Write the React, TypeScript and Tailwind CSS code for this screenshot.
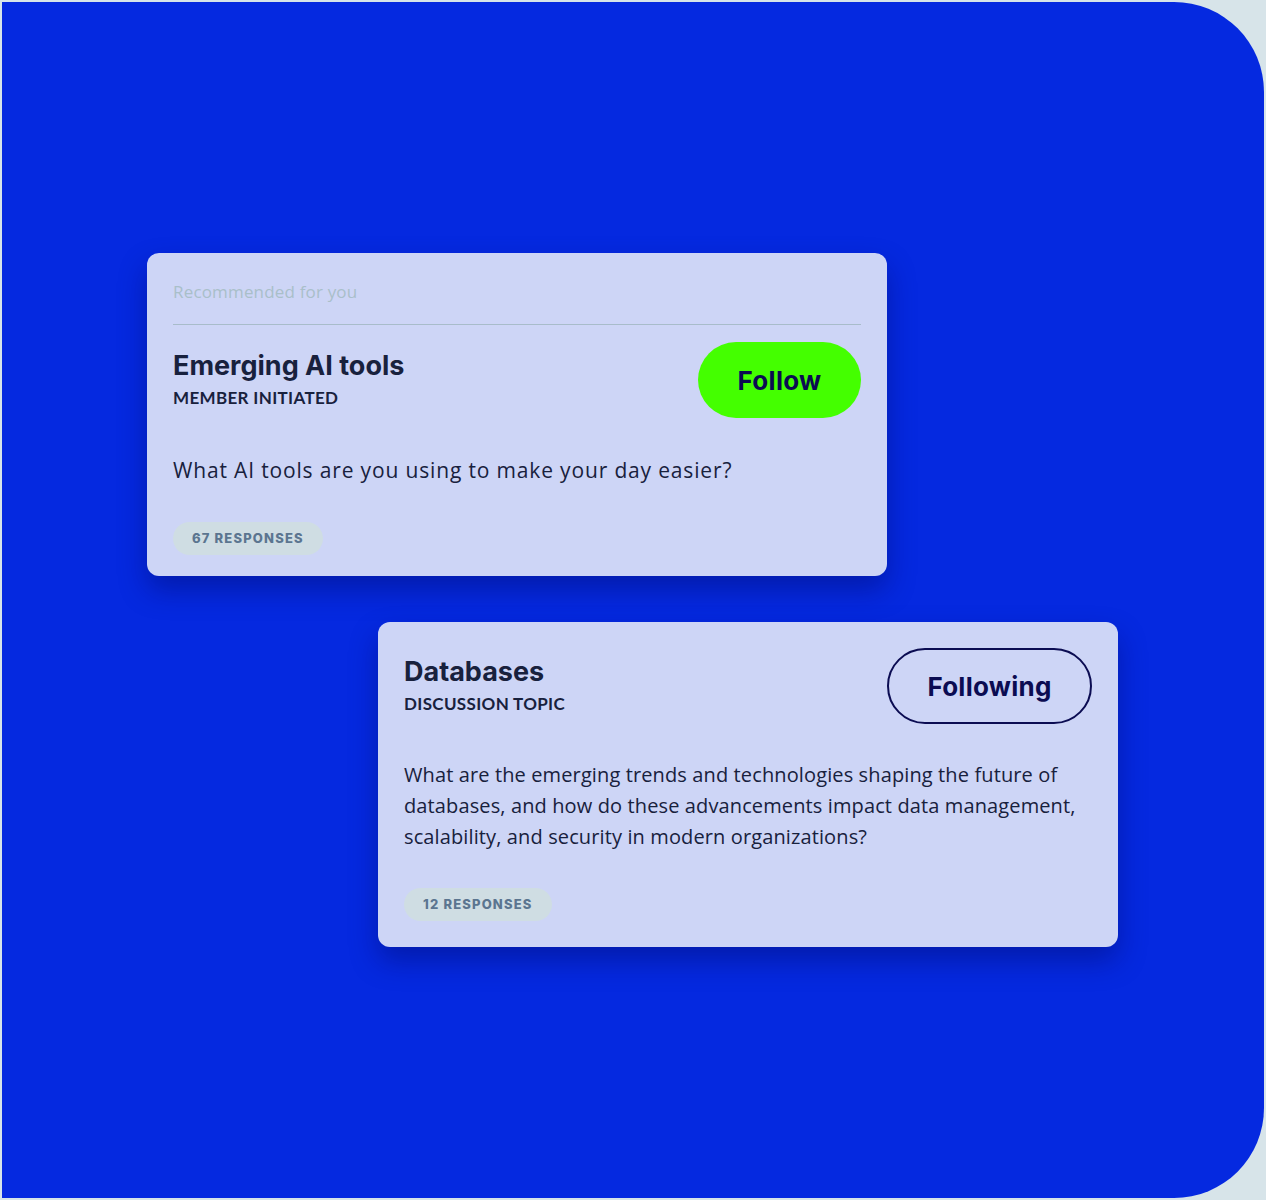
import React from 'react';

const titleFont = { fontFamily: 'Inter, "Noto Sans", sans-serif' };
const bodyFont = { fontFamily: '"Open Sans", Lato, sans-serif' };
const labelFont = { fontFamily: 'Lato, "Open Sans", sans-serif' };

function Pill({ label }: { label: string }) {
  return (
    <div
      style={titleFont}
      className="inline-flex h-[33px] items-center rounded-full bg-[#cfdde3] px-[19px] text-[13px] font-extrabold tracking-[0.09em] text-[#5b7590]"
    >
      {label}
    </div>
  );
}

function TopicHead({ title, kind, button }: { title: string; kind: string; button: React.ReactNode }) {
  return (
    <div className="flex items-start justify-between">
      <div className="pt-[7px]">
        <h2 style={titleFont} className="text-[27px] font-bold leading-[34px] text-[#18213d]">
          {title}
        </h2>
        <p style={labelFont} className="mt-[3px] text-[17px] font-bold leading-[24px] tracking-[0.02em] text-[#18213d]">
          {kind}
        </p>
      </div>
      {button}
    </div>
  );
}

export default function App() {
  return (
    <div className="h-[1200px] w-[1266px] bg-[#d7e4e9] p-[2px]">
      <div className="h-full w-full overflow-hidden rounded-r-[90px] bg-[#0529e0] pl-[145px] pt-[251px]">
        {/* recommended card */}
        <div className="w-[740px] rounded-[12px] bg-[#cdd5f6] px-[26px] pb-[21px] pt-[27px] shadow-[0_14px_28px_rgba(0,12,110,0.45)]">
          <p style={bodyFont} className="text-[17px] leading-[24px] tracking-[0.01em] text-[#a9bfc9]">
            Recommended for you
          </p>
          <div className="mt-[20px] h-px bg-[#a8bcca]" />
          <div className="mt-[17px]">
            <TopicHead
              title="Emerging AI tools"
              kind="MEMBER INITIATED"
              button={
                <button
                  style={titleFont}
                  className="h-[76px] w-[163px] rounded-full bg-[#44ff00] text-[26px] font-bold tracking-[0.01em] text-[#0b0c52]"
                >
                  Follow
                </button>
              }
            />
          </div>
          <p style={bodyFont} className="mt-[37px] text-[21px] leading-[30px] tracking-[0.04em] text-[#18213d]">
            What AI tools are you using to make your day easier?
          </p>
          <div className="mt-[37px]">
            <Pill label="67 RESPONSES" />
          </div>
        </div>

        {/* followed topic card */}
        <div className="ml-[231px] mt-[46px] w-[740px] rounded-[12px] bg-[#cdd5f6] px-[26px] pb-[26px] pt-[26px] shadow-[0_14px_28px_rgba(0,12,110,0.45)]">
          <TopicHead
            title="Databases"
            kind="DISCUSSION TOPIC"
            button={
              <button
                style={titleFont}
                className="h-[76px] w-[205px] rounded-full border-2 border-[#0b0c52] text-[26px] font-bold tracking-[0.01em] text-[#0b0c52]"
              >
                Following
              </button>
            }
          />
          <p style={bodyFont} className="mt-[35px] text-[20px] leading-[31px] tracking-[0.006em] text-[#18213d]">
            What are the emerging trends and technologies shaping the future of
            <br />
            databases, and how do these advancements impact data management,
            <br />
            scalability, and security in modern organizations?
          </p>
          <div className="mt-[36px]">
            <Pill label="12 RESPONSES" />
          </div>
        </div>
      </div>
    </div>
  );
}
